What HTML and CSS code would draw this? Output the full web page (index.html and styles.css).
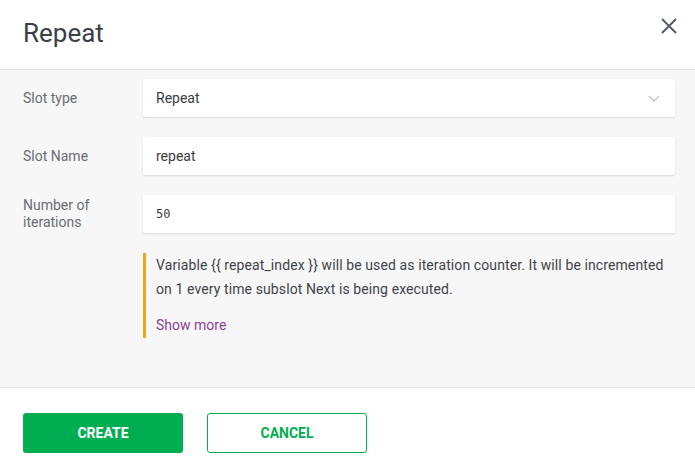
FILE: index.html
```html
<!DOCTYPE html>
<html lang="en">

<head>
    <meta charset="UTF-8">
    <meta name="viewport" content="width=device-width, initial-scale=1.0">
    <title>Repeat</title>
    <link rel="stylesheet" href="styles.css">
</head>

<body>

    <div class="dialog">
        <div class="dialog-header">
            <h1>Repeat</h1>
            <button class="close-btn" aria-label="Close">
                <svg width="16" height="16" viewBox="0 0 16 16">
                    <path d="M1 1 L15 15 M15 1 L1 15" stroke="#4f5a65" stroke-width="1.8" fill="none" />
                </svg>
            </button>
        </div>

        <div class="dialog-body">
            <div class="form-row">
                <label>Slot type</label>
                <div class="field select">
                    <span>Repeat</span>
                    <svg width="12" height="7" viewBox="0 0 12 7">
                        <path d="M1 1 L6 6 L11 1" stroke="#c4c4c4" stroke-width="1.3" fill="none" />
                    </svg>
                </div>
            </div>

            <div class="form-row">
                <label>Slot Name</label>
                <div class="field">repeat</div>
            </div>

            <div class="form-row">
                <label>Number of iterations</label>
                <div class="field mono">50</div>
            </div>

            <div class="form-row">
                <span></span>
                <div class="note">
                    <p>Variable {{ repeat_index }} will be used as iteration counter. It will be incremented on 1 every time subslot Next is being executed.</p>
                    <a href="#" class="show-more">Show more</a>
                </div>
            </div>
        </div>

        <div class="dialog-footer">
            <button class="create-btn">Create</button>
            <button class="cancel-btn">Cancel</button>
        </div>
    </div>

</body>

</html>
```

FILE: styles.css
```css
body {
    margin: 0;
    font-family: Roboto, "Liberation Sans", sans-serif;
    background-color: #fff;
}

.dialog {
    width: 695px;
    height: 473px;
    display: flex;
    flex-direction: column;
}

.dialog-header {
    flex-shrink: 0;
    height: 69px;
    border-bottom: 1px solid #e2e2e2;
    display: flex;
    align-items: flex-start;
    justify-content: space-between;
    padding: 0 18px 0 23px;
}

.dialog-header h1 {
    margin: 18px 0 0;
    font-size: 26px;
    font-weight: 400;
    color: #3b4148;
    line-height: 30px;
}

.close-btn {
    background: none;
    border: none;
    padding: 0;
    margin-top: 18px;
    cursor: pointer;
}

.dialog-body {
    flex-shrink: 0;
    background-color: #f7f7f7;
    padding: 9px 20px 49px 23px;
    display: flex;
    flex-direction: column;
    gap: 20px;
    border-bottom: 1px solid #e2e2e2;
}

.form-row {
    display: grid;
    grid-template-columns: 120px 1fr;
    align-items: center;
}

.form-row label {
    font-size: 14px;
    color: #696d73;
    line-height: 17px;
    padding-right: 40px;
}

.field {
    height: 38px;
    background-color: #fff;
    box-shadow: 0 1px 2px rgba(0, 0, 0, 0.12);
    border-radius: 2px;
    padding: 0 13px;
    display: flex;
    align-items: center;
    font-size: 14px;
    color: #3a3d42;
}

.field.select {
    justify-content: space-between;
    padding-right: 15px;
}

.field.mono {
    font-family: "DejaVu Sans Mono", monospace;
    font-size: 12px;
}

.note {
    border-left: 3px solid #f4a51c;
    padding: 0 0 1px 10px;
}

.note p {
    margin: 0;
    font-size: 14px;
    line-height: 24px;
    letter-spacing: 0.1px;
    color: #40444a;
}

.show-more {
    display: block;
    margin-top: 12px;
    font-size: 14px;
    line-height: 24px;
    color: #8e3f94;
    text-decoration: none;
}

.dialog-footer {
    flex: 1;
    padding: 25px 23px;
    display: flex;
    gap: 24px;
    align-items: flex-start;
}

.dialog-footer button {
    width: 160px;
    height: 40px;
    border-radius: 3px;
    font-family: Roboto, "Liberation Sans", sans-serif;
    font-size: 14px;
    font-weight: 700;
    text-transform: uppercase;
    cursor: pointer;
}

.create-btn {
    background-color: #00ad50;
    color: #fff;
    border: none;
}

.cancel-btn {
    background-color: #fff;
    color: #00ad50;
    border: 1px solid #00ad50;
}
```
